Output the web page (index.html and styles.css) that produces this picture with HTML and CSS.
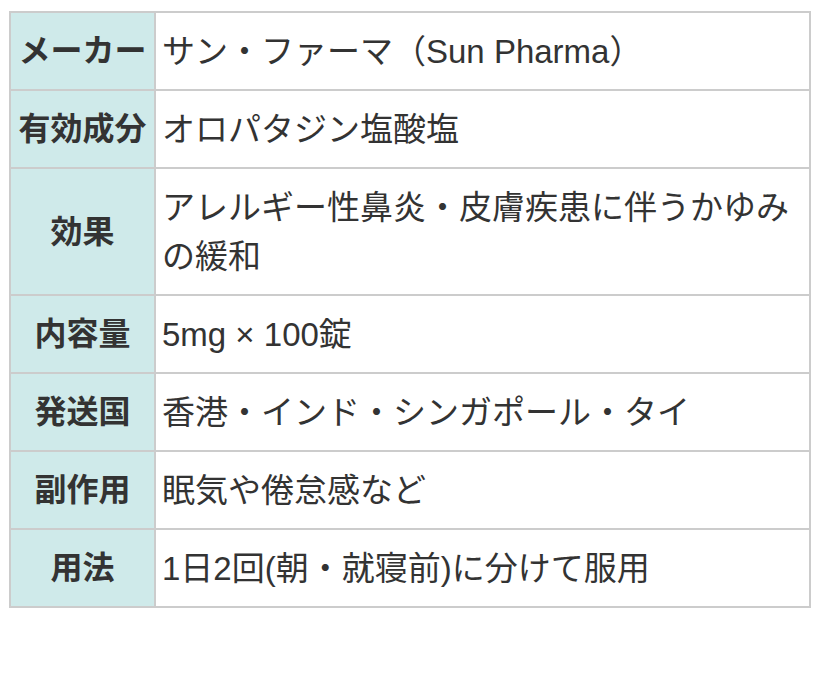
FILE: index.html
```html
<!DOCTYPE html>
<html lang="ja">
<head>
<meta charset="utf-8">
<title>オロパタジン</title>
<link rel="stylesheet" href="styles.css">
</head>
<body>
<div class="wrap">
<table class="spec">
<colgroup><col class="col-h"><col></colgroup>
<tbody>
<tr><th>メーカー</th><td>サン・ファーマ（Sun Pharma）</td></tr>
<tr><th>有効成分</th><td>オロパタジン塩酸塩</td></tr>
<tr><th>効果</th><td>アレルギー性鼻炎・皮膚疾患に伴うかゆみの緩和</td></tr>
<tr><th>内容量</th><td>5mg × 100錠</td></tr>
<tr><th>発送国</th><td>香港・インド・シンガポール・タイ</td></tr>
<tr><th>副作用</th><td>眠気や倦怠感など</td></tr>
<tr><th>用法</th><td>1日2回(朝・就寝前)に分けて服用</td></tr>
</tbody>
</table>
</div>
</body>
</html>
```
FILE: styles.css
```css
html, body {
  margin: 0;
  padding: 0;
  background: #ffffff;
}
.wrap {
  padding: 11px 9px 0 9px;
}
.spec {
  width: 100%;
  border-collapse: collapse;
  font-family: "Liberation Sans", Arial, "Noto Sans CJK JP", sans-serif;
  line-height: 49px;
  color: #333333;
}
.col-h {
  width: 145px;
}
.spec th,
.spec td {
  border: 2px solid #cccccc;
  padding: 14px 6px 13px 6px;
  vertical-align: middle;
}
.spec th {
  background: #cfeaea;
  font-size: 32px;
  font-weight: bold;
  text-align: center;
  white-space: nowrap;
}
.spec td {
  font-size: 33px;
  text-align: left;
  background: #ffffff;
}
```
